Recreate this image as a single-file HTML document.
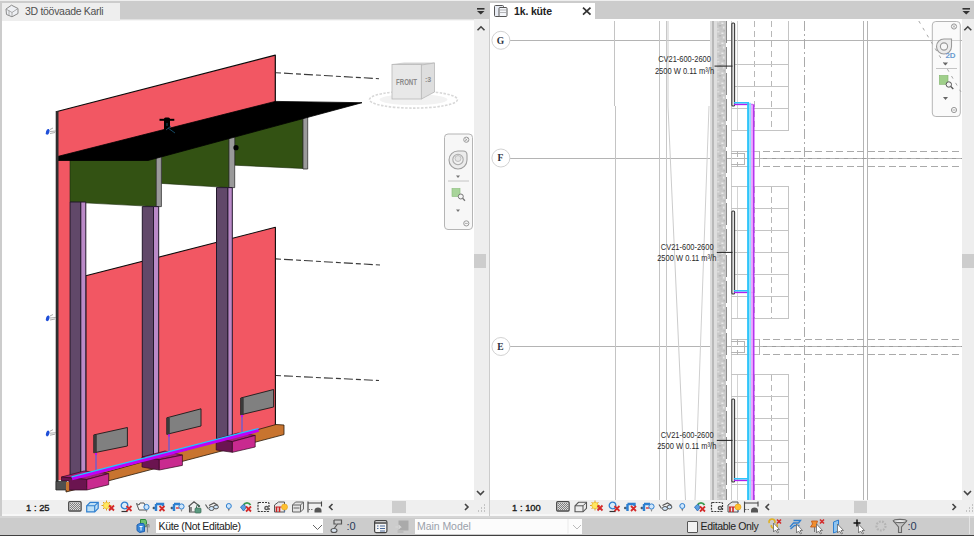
<!DOCTYPE html>
<html><head><meta charset="utf-8">
<style>
html,body{margin:0;padding:0;}
body{width:974px;height:536px;overflow:hidden;background:#cccccc;position:relative;font-family:"Liberation Sans",sans-serif;}
.a{position:absolute;}
svg{position:absolute;overflow:hidden;}
.txt{position:absolute;white-space:nowrap;font-family:"Liberation Sans",sans-serif;}
</style></head>
<body>
<!-- top light row -->
<div class="a" style="left:0;top:0;width:974px;height:1px;background:#eeeeee"></div>
<!-- left panel -->
<div class="a" style="left:2px;top:18.6px;width:486.6px;height:1.4px;background:#e2e2e2"></div><div class="a" style="left:2px;top:20px;width:486.6px;height:1px;background:#f6f6f6"></div>
<div class="a" style="left:2px;top:2.8px;width:118.3px;height:18.2px;background:#eeeeee"></div>
<div class="txt" id="t1" style="left:25px;top:4px;font-size:10.5px;line-height:14px;color:#505050;letter-spacing:-0.3px">3D töövaade Karli</div>
<div class="a" style="left:2px;top:21px;width:472px;height:479px;background:#ffffff"></div>
<svg style="left:2px;top:21px" width="472" height="479" viewBox="2 21 472 479">
<g stroke-linejoin="round">
<!-- upper pink panel -->
<polygon points="57,111.5 275.3,55.2 275.3,104 57,160" fill="#f25763" stroke="#0a0a0a" stroke-width="1.2"/>
<!-- dash-dot lines -->
<path d="M276,72.7 L379,78.7" stroke="#3a3a3a" stroke-width="1.1" stroke-dasharray="5,3,9,3" fill="none"/>
<path d="M276,258.9 L380,265" stroke="#3a3a3a" stroke-width="1.1" stroke-dasharray="5,3,9,3" fill="none"/>
<path d="M276,375.5 L379,380.5" stroke="#3a3a3a" stroke-width="1.1" stroke-dasharray="5,3,9,3" fill="none"/>
<!-- left pink strip -->
<rect x="57" y="158" width="13.5" height="322" fill="#f25763"/>
<!-- lower pink panel -->
<polygon points="85.8,275.8 275.4,227.3 275.4,426.5 85.8,479.5" fill="#f25763" stroke="#0a0a0a" stroke-width="1.1"/>
<!-- green panels -->
<polygon points="70,159 156.3,155 156.3,206.6 70,202.1" fill="#335213" stroke="#1a2a0a" stroke-width="0.6"/>
<polygon points="161.4,145 229,128 229,187.6 161.4,183.4" fill="#335213" stroke="#1a2a0a" stroke-width="0.6"/>
<polygon points="234.7,128 303,112 303,168.5 234.7,165.2" fill="#335213" stroke="#1a2a0a" stroke-width="0.6"/>
<!-- gray column edges -->
<rect x="156.3" y="150" width="5.1" height="56.6" fill="#9a9a9a" stroke="#333" stroke-width="0.8"/>
<rect x="229" y="128" width="5.7" height="59.6" fill="#9a9a9a" stroke="#333" stroke-width="0.8"/>
<rect x="303" y="112" width="4.7" height="57" fill="#9a9a9a" stroke="#333" stroke-width="0.8"/>
<!-- slab -->
<polygon points="57.5,156.5 275.3,101.4 362,102.7 148,160.5 57.5,160.5" fill="#000" stroke="#000" stroke-width="0.8"/>
<!-- vent -->
<path d="M159.5,119.8 L174.3,119.8" stroke="#000" stroke-width="2" fill="none"/><rect x="164" y="117.5" width="6" height="13" rx="1.5" fill="#000"/><path d="M167,123 L167,126 M168,128 L175,133 M166,130 L171,126" stroke="#1a5a7a" stroke-width="0.8"/>
<circle cx="236" cy="147.7" r="2.6" fill="#000"/>
<!-- purple columns -->
<rect x="70.1" y="202" width="10.7" height="276" fill="#614869" stroke="#22182a" stroke-width="1"/>
<rect x="80.8" y="202" width="5" height="276" fill="#bb8ac8" stroke="#22182a" stroke-width="1"/>
<rect x="142.3" y="206.6" width="11.2" height="252" fill="#614869" stroke="#22182a" stroke-width="1"/>
<rect x="153.5" y="206.6" width="5.2" height="252" fill="#bb8ac8" stroke="#22182a" stroke-width="1"/>
<rect x="216.5" y="187.6" width="11.4" height="252" fill="#614869" stroke="#22182a" stroke-width="1"/>
<rect x="227.9" y="187.6" width="4.4" height="252" fill="#bb8ac8" stroke="#22182a" stroke-width="1"/>
<!-- left dark edge -->
<rect x="55.7" y="111" width="2.8" height="379" fill="#2e2e2e"/>
<!-- grilles -->
<polygon points="93.8,434.9 127.4,427.5 127.4,446 93.8,452.8" fill="#808080" stroke="#1a1a1a" stroke-width="0.9"/>
<rect x="93.8" y="435" width="3" height="18" fill="#3a3a3a"/>
<polygon points="166.8,417.8 201,408.8 201,426 166.8,434.3" fill="#808080" stroke="#1a1a1a" stroke-width="0.9"/>
<rect x="166.8" y="418" width="3" height="16.5" fill="#3a3a3a"/>
<polygon points="240.7,398 273.6,389.5 273.6,407 240.7,414.8" fill="#808080" stroke="#1a1a1a" stroke-width="0.9"/>
<rect x="240.7" y="398" width="3" height="17" fill="#3a3a3a"/>
<!-- small vertical pipes -->
<path d="M96,453 L96,471 M169,434.5 L169,452 M242,415 L242,433" stroke="#4a5cf0" stroke-width="1.1" fill="none"/><path d="M96,453 L96,455 M169,434.5 L169,436.5 M242,415 L242,417" stroke="#c800ff" stroke-width="1.6" fill="none"/>
<!-- orange base -->
<polygon points="66,483.5 276,424.5 284,425 284,434.6 66,492" fill="#c8742f" stroke="#2a1a0a" stroke-width="0.8"/>
<!-- pedestals -->
<polygon points="61.5,477 84,471 108.7,473.6 86.8,479.5" fill="#a5207a" stroke="#300820" stroke-width="0.7"/>
<polygon points="61.5,477 86.8,479.5 86.8,490 69,490 69,481 61.5,481" fill="#6b1450" stroke="#300820" stroke-width="0.7"/>
<polygon points="86.8,479.5 108.7,473.6 108.7,484.7 86.8,490" fill="#c92a8f" stroke="#300820" stroke-width="0.7"/>
<polygon points="142,457 165,451 182.4,455.1 159.3,459.7" fill="#a5207a" stroke="#300820" stroke-width="0.7"/>
<polygon points="142,457 159.3,459.7 159.3,470 142,467" fill="#6b1450" stroke="#300820" stroke-width="0.7"/>
<polygon points="159.3,459.7 182.4,455.1 182.4,465.4 159.3,470" fill="#c92a8f" stroke="#300820" stroke-width="0.7"/>
<polygon points="216.2,439 238,433 255.2,435.4 232.4,441.6" fill="#a5207a" stroke="#300820" stroke-width="0.7"/>
<polygon points="216.2,439 232.4,441.6 232.4,452.3 216.2,450" fill="#6b1450" stroke="#300820" stroke-width="0.7"/>
<polygon points="232.4,441.6 255.2,435.4 255.2,447 232.4,452.3" fill="#c92a8f" stroke="#300820" stroke-width="0.7"/>
<!-- dark block -->
<rect x="56" y="481.3" width="10.5" height="8.7" fill="#505050" stroke="#222" stroke-width="0.7"/>
<rect x="66" y="482" width="3.2" height="8" fill="#c8742f"/>
<!-- main pipe -->
<path d="M72,478.6 L258.6,430.2" stroke="#c000f8" stroke-width="3.4" fill="none"/>
<path d="M71.5,476.8 L258.6,428.5" stroke="#1ec8ff" stroke-width="1.2" fill="none"/>
<!-- small blue markers -->
<g fill="#1f4fd8"><ellipse cx="47.7" cy="131.8" rx="1.7" ry="3" transform="rotate(20 47.7 131.8)"/><ellipse cx="47.7" cy="318.3" rx="1.7" ry="3" transform="rotate(20 47.7 318.3)"/><ellipse cx="47.7" cy="433.5" rx="1.7" ry="3" transform="rotate(20 47.7 433.5)"/></g>
<g stroke="#888" stroke-width="0.7"><path d="M50,129.5 L53,128 M50,131.5 L56,131 M50,133.5 L55,132.5 M50,316 L53,314.5 M50,318 L56,317.5 M50,320 L55,319 M50,431.2 L53,429.7 M50,433.2 L56,432.7 M50,435.2 L55,434.2"/></g>
</g>
<!-- view cube -->
<ellipse cx="413.5" cy="99.6" rx="44" ry="8.5" fill="none" stroke="#d8d8d8" stroke-width="1.6" stroke-dasharray="2.5,1.5"/>
<ellipse cx="413.5" cy="99.6" rx="34" ry="5.5" fill="#f2f2f2" stroke="none"/>
<polygon points="392,64.5 404,63 434.5,63 421.4,65" fill="#dcdcdc" stroke="#bbb" stroke-width="0.6"/>
<rect x="392" y="64.5" width="29.4" height="34.5" fill="#e8e8e8" stroke="#b8b8b8" stroke-width="0.8"/>
<polygon points="421.4,65 434.5,63 434.5,92 421.4,99" fill="#dedede" stroke="#b8b8b8" stroke-width="0.8"/>
<text x="406.5" y="85" font-family="Liberation Sans" font-size="8.5" fill="#8a8a8a" text-anchor="middle" textLength="21" lengthAdjust="spacingAndGlyphs" font-weight="bold">FRONT</text>
<text x="428" y="82" font-family="Liberation Sans" font-size="7" fill="#8a8a8a" text-anchor="middle" font-weight="bold">:3</text>
<!-- nav bar -->
<rect x="444.5" y="134" width="28" height="95.5" rx="3.5" fill="#f7f7f7" stroke="#b5b5b5" stroke-width="1"/>
<circle cx="466.3" cy="139.7" r="2.6" fill="none" stroke="#999" stroke-width="1"/>
<circle cx="466.3" cy="223.4" r="2.6" fill="none" stroke="#999" stroke-width="1"/>
<path d="M464.8,223.4 L467.8,223.4 M465.1,138.5 L467.5,140.9 M467.5,138.5 L465.1,140.9" stroke="#999" stroke-width="0.8"/>
<path d="M458,151 a9,9 0 1 0 9,9 L467,155 Q467,151 463,151 Z" fill="#ececec" stroke="#a0a0a0" stroke-width="1.1"/>
<circle cx="458" cy="159.5" r="5.2" fill="#f0f0f0" stroke="#aaaaaa" stroke-width="1.1"/><circle cx="458" cy="158.5" r="3" fill="#e4e4e4" stroke="#b4b4b4" stroke-width="0.8"/>
<path d="M456,175.5 L460,175.5 L458,178 Z" fill="#777"/>
<path d="M448,181 L469,181" stroke="#c4c4c4" stroke-width="1"/>
<rect x="452" y="188.5" width="8" height="8" fill="#a8d49a" stroke="#88bb78" stroke-width="0.6"/>
<circle cx="460.8" cy="196.5" r="2.5" fill="#f4f4f4" stroke="#777" stroke-width="1"/>
<path d="M462.6,198.3 L465,200.7" stroke="#777" stroke-width="1.3"/>
<path d="M456,209.5 L460,209.5 L458,212 Z" fill="#777"/>
</svg>

<div class="a" style="left:474px;top:18.6px;width:14.6px;height:481.4px;background:#eeeeee"></div>
<div class="a" style="left:474px;top:254px;width:12px;height:14px;background:#cdcdcd"></div>
<div class="a" style="left:2px;top:500px;width:486.6px;height:13.5px;background:#efefef"></div>
<div class="a" style="left:2px;top:513.5px;width:486.6px;height:2px;background:#f7f7f7"></div>
<div class="a" style="left:392.4px;top:501px;width:13.6px;height:12.3px;background:#cdcdcd"></div>
<div class="txt" id="t2" style="left:26px;top:501.5px;font-size:9.4px;line-height:12px;color:#1a1a1a;font-weight:normal;-webkit-text-stroke:0.35px #1a1a1a;letter-spacing:-0.1px;word-spacing:0.3px">1 : 25</div>
<!-- right panel -->
<div class="a" style="left:490px;top:18.6px;width:484px;height:2.4px;background:#ffffff"></div>
<div class="a" style="left:490px;top:2.8px;width:105.2px;height:18.2px;background:#ffffff"></div>
<div class="txt" id="t3" style="left:514px;top:4px;font-size:10.5px;line-height:14px;color:#222;font-weight:bold;letter-spacing:-0.15px">1k. küte</div>
<div class="a" style="left:490px;top:21px;width:471.5px;height:479px;background:#ffffff"></div>
<svg style="left:490px;top:21px" width="471.5" height="479" viewBox="490 21 471.5 479">
<g fill="none" shape-rendering="crispEdges">
<path d="M510,40.5 L962,40.5" stroke="#b4b4b4" stroke-width="1"/>
<path d="M510,158.5 L962,158.5" stroke="#b4b4b4" stroke-width="1"/>
<path d="M510,346.5 L962,346.5" stroke="#b4b4b4" stroke-width="1"/>
<path d="M659.5,21 L659.5,500" stroke="#c4c4c4" stroke-width="1"/>
<path d="M666,21 L666,500" stroke="#c8c8c8" stroke-width="1"/>
<path d="M614.5,21 L614.5,106 M615.5,106 L615.5,500" stroke="#c4c4c4" stroke-width="1"/>
</g>
<path d="M668,21 L668,106 L685.5,500" stroke="#cccccc" stroke-width="1" fill="none"/>
<path d="M709,106 L695,500" stroke="#d0d0d0" stroke-width="1" fill="none"/>
<g shape-rendering="crispEdges">
<rect x="709.8" y="21" width="2.2" height="479" fill="#dcdcdc"/>
<rect x="712" y="21" width="2" height="479" fill="#b8b8b8"/>
<rect x="714" y="21" width="2.5" height="479" fill="#dedede"/>
<rect x="716.5" y="21" width="9.5" height="479" fill="#c9c9c9"/>
<path d="M726.6,21 L726.6,500" stroke="#8a8a8a" stroke-width="1.2" stroke-dasharray="22,4"/>
</g>
<defs><pattern id="hp" x="716.5" y="0" width="9.5" height="10" patternUnits="userSpaceOnUse"><rect x="1" y="1" width="1.5" height="1.5" fill="#e6e6e6"/><rect x="5" y="2.5" width="2" height="1.5" fill="#ededed"/><rect x="2.5" y="5" width="2" height="1.5" fill="#b0b0b0"/><rect x="6.5" y="6.5" width="1.5" height="2" fill="#eaeaea"/><rect x="0.5" y="8" width="1.5" height="1.5" fill="#dedede"/><rect x="7" y="0" width="1.5" height="1.5" fill="#b8b8b8"/><rect x="4" y="8.5" width="1.5" height="1" fill="#bdbdbd"/></pattern></defs>
<rect x="716.5" y="21" width="9.5" height="479" fill="url(#hp)"/>
<g fill="none" shape-rendering="crispEdges">
<path d="M731,21 L731,500" stroke="#cccccc" stroke-width="1"/>
<path d="M804,21 L804,500" stroke="#aaaaaa" stroke-width="1" stroke-dasharray="10,3,2,3"/>
<path d="M863,21 L863,500 M867.2,21 L867.2,500" stroke="#b4b4b4" stroke-width="1"/>
<path d="M788.5,21 L788.5,130.5" stroke="#c4c4c4" stroke-width="1"/><path d="M737,21 L737,130.5" stroke="#d4d4d4" stroke-width="1"/>
<path d="M754.2,21 L754.2,130.5 M771.5,21 L771.5,130.5" stroke="#b8b8b8" stroke-width="1" stroke-dasharray="6,4"/>
<path d="M731,64.5 L789,64.5" stroke="#c4c4c4" stroke-width="1"/>
<path d="M731,86.5 L789,86.5" stroke="#c4c4c4" stroke-width="1"/>
<path d="M731,108.5 L789,108.5" stroke="#c4c4c4" stroke-width="1"/>
<path d="M731,130.5 L789,130.5" stroke="#c4c4c4" stroke-width="1"/>
<path d="M788.5,186.5 L788.5,318.5" stroke="#c4c4c4" stroke-width="1"/><path d="M737,186.5 L737,318.5" stroke="#d4d4d4" stroke-width="1"/>
<path d="M754.2,186.5 L754.2,318.5 M771.5,186.5 L771.5,318.5" stroke="#b8b8b8" stroke-width="1" stroke-dasharray="6,4"/>
<path d="M731,186.5 L789,186.5" stroke="#c4c4c4" stroke-width="1"/>
<path d="M731,208.5 L789,208.5" stroke="#c4c4c4" stroke-width="1"/>
<path d="M731,230.5 L789,230.5" stroke="#c4c4c4" stroke-width="1"/>
<path d="M731,252.5 L789,252.5" stroke="#c4c4c4" stroke-width="1"/>
<path d="M731,274.5 L789,274.5" stroke="#c4c4c4" stroke-width="1"/>
<path d="M731,296.5 L789,296.5" stroke="#c4c4c4" stroke-width="1"/>
<path d="M731,318.5 L789,318.5" stroke="#c4c4c4" stroke-width="1"/>
<path d="M788.5,374.5 L788.5,500" stroke="#c4c4c4" stroke-width="1"/><path d="M737,374.5 L737,500" stroke="#d4d4d4" stroke-width="1"/>
<path d="M754.2,374.5 L754.2,500 M771.5,374.5 L771.5,500" stroke="#b8b8b8" stroke-width="1" stroke-dasharray="6,4"/>
<path d="M731,374.5 L789,374.5" stroke="#c4c4c4" stroke-width="1"/>
<path d="M731,396.5 L789,396.5" stroke="#c4c4c4" stroke-width="1"/>
<path d="M731,418.5 L789,418.5" stroke="#c4c4c4" stroke-width="1"/>
<path d="M731,440.5 L789,440.5" stroke="#c4c4c4" stroke-width="1"/>
<path d="M731,462.5 L789,462.5" stroke="#c4c4c4" stroke-width="1"/>
<path d="M731,484.5 L789,484.5" stroke="#c4c4c4" stroke-width="1"/>
<path d="M731,151.0 L760,151.0" stroke="#c0c0c0" stroke-width="1"/>
<path d="M762.5,151.0 L962,151.0" stroke="#aaaaaa" stroke-width="1" stroke-dasharray="7,3.5"/>
<path d="M731,166.5 L760,166.5" stroke="#c0c0c0" stroke-width="1"/>
<path d="M762.5,166.5 L962,166.5" stroke="#aaaaaa" stroke-width="1" stroke-dasharray="7,3.5"/>
<path d="M762.5,158.5 L962,158.5" stroke="#9c9c9c" stroke-width="1" stroke-dasharray="4,5"/>
<path d="M731,153.0 L744.5,153.0 L744.5,164.5 L731,164.5 M737.5,150.5 L737.5,156.5 M737.5,161.5 L737.5,166.5 M759.8,151.0 L759.8,166.5" stroke="#b4b4b4" stroke-width="1"/>
<path d="M731,339.0 L760,339.0" stroke="#c0c0c0" stroke-width="1"/>
<path d="M762.5,339.0 L962,339.0" stroke="#aaaaaa" stroke-width="1" stroke-dasharray="7,3.5"/>
<path d="M731,354.5 L760,354.5" stroke="#c0c0c0" stroke-width="1"/>
<path d="M762.5,354.5 L962,354.5" stroke="#aaaaaa" stroke-width="1" stroke-dasharray="7,3.5"/>
<path d="M762.5,346.5 L962,346.5" stroke="#9c9c9c" stroke-width="1" stroke-dasharray="4,5"/>
<path d="M731,341.0 L744.5,341.0 L744.5,352.5 L731,352.5 M737.5,338.5 L737.5,344.5 M737.5,349.5 L737.5,354.5 M759.8,339.0 L759.8,354.5" stroke="#b4b4b4" stroke-width="1"/>
</g>
<rect x="731.8" y="23" width="2.8" height="83" rx="1" fill="#e0e0e0" stroke="#3a3a3a" stroke-width="1.1"/>
<path d="M734,102.8 L749,102.8" stroke="#2ec5fa" stroke-width="1.6" fill="none"/>
<path d="M734,104.5 L753,104.5" stroke="#b020f0" stroke-width="1.3" fill="none"/>
<path d="M714.5,66.1 L732.5,66.1" stroke="#222" stroke-width="1" fill="none"/>
<text x="684.5" y="62.2" font-family="Liberation Sans" font-size="9" fill="#2a2a2a" text-anchor="middle" textLength="52.7" lengthAdjust="spacingAndGlyphs">CV21-600-2600</text>
<text x="684.5" y="73.7" font-family="Liberation Sans" font-size="9" fill="#2a2a2a" text-anchor="middle" textLength="59.2" lengthAdjust="spacingAndGlyphs">2500 W 0.11 m³/h</text>
<rect x="731.8" y="211" width="2.8" height="83" rx="1" fill="#e0e0e0" stroke="#3a3a3a" stroke-width="1.1"/>
<path d="M734,290.8 L749,290.8" stroke="#2ec5fa" stroke-width="1.6" fill="none"/>
<path d="M734,292.5 L753,292.5" stroke="#b020f0" stroke-width="1.3" fill="none"/>
<path d="M716.8,252.4 L732.5,252.4" stroke="#222" stroke-width="1" fill="none"/>
<text x="687.2" y="249.8" font-family="Liberation Sans" font-size="9" fill="#2a2a2a" text-anchor="middle" textLength="52.7" lengthAdjust="spacingAndGlyphs">CV21-600-2600</text>
<text x="686.8" y="260.9" font-family="Liberation Sans" font-size="9" fill="#2a2a2a" text-anchor="middle" textLength="59.2" lengthAdjust="spacingAndGlyphs">2500 W 0.11 m³/h</text>
<rect x="731.8" y="399" width="2.8" height="83" rx="1" fill="#e0e0e0" stroke="#3a3a3a" stroke-width="1.1"/>
<path d="M734,478.8 L749,478.8" stroke="#2ec5fa" stroke-width="1.6" fill="none"/>
<path d="M734,480.5 L753,480.5" stroke="#b020f0" stroke-width="1.3" fill="none"/>
<path d="M716.8,440.4 L732.5,440.4" stroke="#222" stroke-width="1" fill="none"/>
<text x="687.2" y="437.8" font-family="Liberation Sans" font-size="9" fill="#2a2a2a" text-anchor="middle" textLength="52.7" lengthAdjust="spacingAndGlyphs">CV21-600-2600</text>
<text x="686.8" y="448.9" font-family="Liberation Sans" font-size="9" fill="#2a2a2a" text-anchor="middle" textLength="59.2" lengthAdjust="spacingAndGlyphs">2500 W 0.11 m³/h</text>
<rect x="747.1" y="102.8" width="2" height="397.2" fill="#2ec5fa"/>
<rect x="749.1" y="102.8" width="2" height="397.2" fill="#8fdcfb"/>
<rect x="751.1" y="104.3" width="1.8" height="395.7" fill="#eaa2ff"/>
<rect x="752.9" y="104.3" width="1.6" height="395.7" fill="#b535f0"/>
<circle cx="500.9" cy="40.3" r="9" fill="#fff" stroke="#d2d2d2" stroke-width="1"/>
<text x="500.4" y="43.599999999999994" font-family="Liberation Serif" font-size="9.5" font-weight="bold" fill="#2a3040" text-anchor="middle">G</text>
<circle cx="500.9" cy="158" r="9" fill="#fff" stroke="#d2d2d2" stroke-width="1"/>
<text x="500.4" y="161.3" font-family="Liberation Serif" font-size="9.5" font-weight="bold" fill="#2a3040" text-anchor="middle">F</text>
<circle cx="500.9" cy="346.5" r="9" fill="#fff" stroke="#d2d2d2" stroke-width="1"/>
<text x="500.4" y="349.8" font-family="Liberation Serif" font-size="9.5" font-weight="bold" fill="#2a3040" text-anchor="middle">E</text>
<rect x="932.3" y="21.5" width="28" height="95" rx="3.5" fill="#f4f4f4" fill-opacity="0.45" stroke="#b5b5b5" stroke-width="1"/>
<path d="M918.8,21 L961,92" stroke="#a8a8a8" stroke-width="1" stroke-dasharray="3,5" fill="none"/>
<circle cx="954" cy="26.5" r="2.6" fill="none" stroke="#999" stroke-width="1"/>
<circle cx="954" cy="110" r="2.6" fill="none" stroke="#999" stroke-width="1"/>
<path d="M952.5,110 L955.5,110 M952.8,25.3 L955.2,27.7 M955.2,25.3 L952.8,27.7" stroke="#999" stroke-width="0.8"/>
<path d="M944,39 a7.5,7.5 0 1 0 7.5,7.5 L951.5,39 Z" fill="#ececec" stroke="#9a9a9a" stroke-width="1.1"/>
<circle cx="944" cy="46.5" r="3.6" fill="#f8f8f8" stroke="#9a9a9a" stroke-width="1.1"/>
<text x="950.5" y="57.5" font-family="Liberation Sans" font-size="8" font-weight="bold" fill="#6a9ad0" text-anchor="middle">2D</text>
<path d="M943,62.5 L948,62.5 L945.5,65.5 Z" fill="#666"/>
<path d="M936,68.5 L957,68.5" stroke="#c4c4c4" stroke-width="1"/>
<rect x="939.4" y="75.5" width="8.6" height="8.8" fill="#9fcf8a" stroke="#7fb36a" stroke-width="0.6"/>
<circle cx="948.8" cy="84.5" r="2.7" fill="#f4f4f4" stroke="#555" stroke-width="1"/>
<path d="M950.8,86.5 L953.3,89" stroke="#555" stroke-width="1.3"/>
<path d="M943,97 L948,97 L945.5,100 Z" fill="#666"/>
</svg>
<div class="a" style="left:961.5px;top:18.6px;width:12.5px;height:481.9px;background:#eeeeee"></div>
<div class="a" style="left:961.5px;top:254px;width:12.5px;height:14px;background:#cdcdcd"></div>
<div class="a" style="left:490px;top:500px;width:484px;height:13.5px;background:#efefef"></div>
<div class="a" style="left:490px;top:513.5px;width:484px;height:2px;background:#f7f7f7"></div>
<div class="a" style="left:853.6px;top:501px;width:13.5px;height:12.3px;background:#cdcdcd"></div>
<div class="txt" id="t4" style="left:512px;top:501.5px;font-size:9.4px;line-height:12px;color:#1a1a1a;font-weight:normal;-webkit-text-stroke:0.35px #1a1a1a;letter-spacing:-0.1px;word-spacing:0.3px">1 : 100</div>
<!-- bottom status -->
<div class="a" style="left:0;top:515.5px;width:974px;height:2.5px;background:#d6d6d6"></div>
<div class="a" style="left:0;top:534.5px;width:974px;height:2px;background:#404040"></div>
<div class="a" style="left:156.3px;top:519.2px;width:166.7px;height:13.8px;background:#ffffff"></div>
<div class="txt" id="t5" style="left:158.5px;top:519.5px;font-size:10.5px;line-height:13px;color:#222;letter-spacing:-0.35px">Küte (Not Editable)</div>
<div class="a" style="left:415px;top:519px;width:166.6px;height:14.5px;background:#fcfcfc"></div>
<div class="txt" id="t6" style="left:417px;top:519.5px;font-size:10.5px;line-height:13px;color:#9aa0aa;letter-spacing:-0.05px">Main Model</div>
<div class="txt" id="t7" style="left:346.5px;top:519.5px;font-size:11px;line-height:13px;color:#2a3a5a">:0</div>
<div class="a" style="left:686.8px;top:520.5px;width:9.5px;height:10px;background:#f2f2f2;border:1px solid #555;border-radius:1px"></div>
<div class="txt" id="t8" style="left:700.5px;top:519.5px;font-size:10.5px;line-height:13px;color:#222;letter-spacing:-0.35px">Editable Only</div>
<div class="txt" id="t9" style="left:907.5px;top:519.5px;font-size:11px;line-height:13px;color:#2a3a5a">:0</div>
<svg style="left:0;top:0" width="974" height="536" viewBox="0 0 974 536">
<defs>
<pattern id="chk" width="2" height="2" patternUnits="userSpaceOnUse"><rect width="1" height="1" fill="#666"/><rect x="1" y="1" width="1" height="1" fill="#666"/></pattern>
<symbol id="i-grid" overflow="visible"><rect x="0.7" y="0.7" width="12.4" height="9.3" rx="1" fill="#ddd" stroke="#4a4a4a" stroke-width="1.3"/><rect x="2" y="2" width="10" height="7" fill="url(#chk)" opacity="0.8"/></symbol>
<symbol id="i-cube" overflow="visible"><path d="M1,4.5 L4.5,1 L12.5,1 L12.5,7 L9,10.5 L1,10.5 Z" fill="#bfe0f5" stroke="#2e7fd0" stroke-width="1.2"/><path d="M1,4.5 L9,4.5 L12.5,1 M9,4.5 L9,10.5" fill="none" stroke="#2e7fd0" stroke-width="1.1"/></symbol>
<symbol id="i-cubeg" overflow="visible"><path d="M1,4.5 L4.5,1 L12.5,1 L12.5,7 L9,10.5 L1,10.5 Z" fill="#ececec" stroke="#555" stroke-width="1.1"/><path d="M1,4.5 L9,4.5 L12.5,1 M9,4.5 L9,10.5" fill="none" stroke="#555" stroke-width="1"/></symbol>
<symbol id="x" overflow="visible"><path d="M-2.5,-2.5 L2.5,2.5 M2.5,-2.5 L-2.5,2.5" stroke="#d42a2a" stroke-width="1.8"/></symbol>
<symbol id="i-sun" overflow="visible"><g stroke="#e0a020" stroke-width="1"><path d="M5,0 L5,10 M0,5 L10,5 M1.5,1.5 L8.5,8.5 M8.5,1.5 L1.5,8.5"/></g><circle cx="5" cy="5" r="3.2" fill="#ffe860" stroke="#e8b020" stroke-width="0.6"/><use href="#x" x="10" y="7.5"/></symbol>
<symbol id="i-magx" overflow="visible"><circle cx="4" cy="4.5" r="3.3" fill="#d8ecfa" stroke="#2e7fd0" stroke-width="1.3"/><path d="M1,10.5 L7,10.5" stroke="#333" stroke-width="1.2"/><use href="#x" x="8.5" y="7.5"/></symbol>
<symbol id="i-teapot" overflow="visible"><path d="M0.5,2.5 L3,4 L4,2 L8,2 L9,4 L10,9 L3,9 Z" fill="#f4f4f4" stroke="#555" stroke-width="1"/><circle cx="10.5" cy="6" r="2.6" fill="#cfe6fb" stroke="#2e7fd0" stroke-width="1"/><path d="M9.5,9 L11.5,9 L10.5,11.5" fill="#888"/></symbol>
<symbol id="i-bluex" overflow="visible"><path d="M0,7 L2,7 M3,3 L10,3 L10,5 M3,3 L3,10" stroke="#2e7fd0" stroke-width="2.4" fill="none"/><circle cx="0.5" cy="7" r="1" fill="#555"/><use href="#x" x="9" y="7.5"/></symbol>
<symbol id="i-blueb" overflow="visible"><path d="M0,7 L2,7 M3,3 L9,3 M3,3 L3,10" stroke="#2e7fd0" stroke-width="2.4" fill="none"/><circle cx="0.5" cy="7" r="1" fill="#555"/><rect x="5" y="6" width="3" height="2" fill="#e07070"/><circle cx="10.5" cy="5.5" r="2.6" fill="#cfe6fb" stroke="#2e7fd0" stroke-width="1"/><path d="M9.5,8.5 L11.5,8.5 L10.5,11" fill="#888"/></symbol>
<symbol id="i-houselock" overflow="visible"><path d="M0.5,5.5 L6,0.8 L12,5.5 M1.5,5 L1.5,11 L7,11 M10.5,4.5 L10.5,6" fill="#f0f0f0" stroke="#555" stroke-width="1.1"/><path d="M3,6 L3,10.5" stroke="#666" stroke-width="1.5"/><rect x="7" y="7" width="6" height="5" rx="1" fill="#5a9a80" stroke="#3a6a55" stroke-width="0.7"/><path d="M8.5,7 L8.5,5.5 a1.5,1.5 0 0 1 3,0" fill="none" stroke="#3a6a55" stroke-width="1"/></symbol>
<symbol id="i-glasses" overflow="visible"><path d="M0.5,3 L3,7 M4,4 L9,1.5 L13,4" fill="none" stroke="#555" stroke-width="1.1"/><ellipse cx="6.5" cy="7" rx="2.6" ry="2" fill="#cfe6fb" stroke="#555" stroke-width="1"/><ellipse cx="11" cy="5.5" rx="2.4" ry="1.9" fill="#cfe6fb" stroke="#555" stroke-width="1"/></symbol>
<symbol id="i-bulb" overflow="visible"><circle cx="2.8" cy="4" r="2.5" fill="#cfe6fb" stroke="#2e7fd0" stroke-width="1"/><path d="M1.8,7 L3.8,7 L2.8,9.5" fill="#777"/></symbol>
<symbol id="i-reveal" overflow="visible"><path d="M4,4 a4,4 0 0 1 7,0" fill="none" stroke="#3a9a50" stroke-width="1.8"/><path d="M1,6 L4,3.5 L7,6 L4,10 Z" fill="#5aa0e0" stroke="#2e6fc0" stroke-width="0.9"/><use href="#x" x="9" y="8"/></symbol>
<symbol id="i-film" overflow="visible"><rect x="1" y="1.5" width="11" height="9" rx="1" fill="#f4f4f4" stroke="#3a3a3a" stroke-width="1.2" stroke-dasharray="2,1"/><circle cx="9.5" cy="7" r="2.3" fill="#555"/><circle cx="9.5" cy="7" r="1" fill="#ddd"/></symbol>
<symbol id="i-housebulb" overflow="visible"><path d="M1,4 L5,1 L11,1 L11,11 L1,11 Z" fill="#e8e8e8" stroke="#555" stroke-width="1"/><path d="M3,6 L3,11 M6,6 L6,11" stroke="#c22" stroke-width="1.6"/><path d="M2,6 L8,6" stroke="#c22" stroke-width="1"/><circle cx="11" cy="6" r="3" fill="#ffc030" stroke="#e0a010" stroke-width="0.6"/><path d="M10,9.5 L12,9.5 L11,12" fill="#5577aa"/></symbol>
<symbol id="i-cube3" overflow="visible"><path d="M1,4 L4,1 L12,1 L12,8 L9,11 L1,11 Z" fill="#e4e4e4" stroke="#666" stroke-width="1"/><path d="M1,4 L9,4 L12,1 M9,4 L9,11 M2,7 L8,7" fill="none" stroke="#666" stroke-width="1"/></symbol>
<symbol id="i-crop" overflow="visible"><path d="M0.5,0 L0.5,11 M14,0 L14,5 M0.5,1.5 L14,1.5" stroke="#444" stroke-width="1.1" fill="none"/><path d="M1,8 L6,8" stroke="#777" stroke-width="1" stroke-dasharray="1.5,1"/><path d="M7,11 L7,9 a3.5,3 0 0 1 7,0 L14,11 Z" fill="#555"/></symbol>
<symbol id="chev-l" overflow="visible"><path d="M3,-3 L0,0 L3,3" fill="none" stroke="#444" stroke-width="1.6"/></symbol>
<symbol id="chev-r" overflow="visible"><path d="M0,-3 L3,0 L0,3" fill="none" stroke="#444" stroke-width="1.6"/></symbol>
<symbol id="chev-u" overflow="visible"><path d="M-3.5,2 L0,-1.5 L3.5,2" fill="none" stroke="#444" stroke-width="1.6"/></symbol>
<symbol id="chev-d" overflow="visible"><path d="M-3.5,-2 L0,1.5 L3.5,-2" fill="none" stroke="#444" stroke-width="1.6"/></symbol>
<symbol id="ddown" overflow="visible"><path d="M0,0.8 L7.5,0.8" stroke="#333" stroke-width="1.6"/><path d="M0,3 L7.5,3 L3.75,6.5 Z" fill="#333"/></symbol>
<symbol id="grip" overflow="visible"><g fill="#999"><rect x="6" y="0" width="1" height="1"/><rect x="3" y="3" width="1" height="1"/><rect x="6" y="3" width="1" height="1"/><rect x="0" y="6" width="1" height="1"/><rect x="3" y="6" width="1" height="1"/><rect x="6" y="6" width="1" height="1"/></g></symbol>
</defs>
<use href="#i-grid" x="68" y="501"/>
<use href="#i-cube" x="85.7" y="501.3"/>
<use href="#i-sun" x="101.5" y="500.5"/>
<use href="#i-magx" x="120.5" y="501"/>
<use href="#i-teapot" x="136" y="501"/>
<use href="#i-bluex" x="153" y="501"/>
<use href="#i-blueb" x="171" y="501"/>
<use href="#i-houselock" x="188" y="501"/>
<use href="#i-glasses" x="205" y="501.5"/>
<use href="#i-bulb" x="226" y="502"/>
<use href="#i-reveal" x="239.5" y="501"/>
<use href="#i-film" x="257" y="501"/>
<use href="#i-housebulb" x="273.5" y="501"/>
<use href="#i-cube3" x="291.5" y="501"/>
<use href="#i-crop" x="307.5" y="501.5"/>
<use href="#chev-l" x="329.5" y="507"/>
<use href="#chev-r" x="465" y="507"/>
<use href="#i-grid" x="556" y="501"/>
<use href="#i-cubeg" x="574" y="501.3"/>
<use href="#i-sun" x="590" y="500.5"/>
<use href="#i-magx" x="608.5" y="501"/>
<use href="#i-bluex" x="624.5" y="501"/>
<use href="#i-blueb" x="641" y="501"/>
<use href="#i-glasses" x="658.5" y="501.5"/>
<use href="#i-bulb" x="679.5" y="502"/>
<use href="#i-reveal" x="693.5" y="501"/>
<use href="#i-film" x="710.5" y="501"/>
<use href="#i-housebulb" x="727" y="501"/>
<use href="#i-crop" x="744" y="501.5"/>
<use href="#chev-l" x="766" y="507"/>
<use href="#chev-r" x="952.5" y="507"/>
<use href="#chev-u" x="481" y="28.3"/>
<use href="#chev-d" x="480.5" y="493"/>
<use href="#chev-u" x="967.8" y="28.3"/>
<use href="#chev-d" x="967.5" y="493"/>
<use href="#grip" x="478" y="504.5"/>
<use href="#grip" x="966" y="504.5"/>
<use href="#ddown" x="477" y="8"/>
<use href="#ddown" x="962.5" y="8"/>
<path d="M583,7.7 L590.5,14.7 M590.5,7.7 L583,14.7" stroke="#333" stroke-width="1.7"/>
<path d="M6,9 L11.5,5.2 L18,8.5 L18,13.5 L12,16.8 L6.5,14.5 Z" fill="#eef0f4" stroke="#8a8a8a" stroke-width="1"/><path d="M6,9 L12,12.5 L18,8.5 M12,12.5 L12,16.8 M9,10.5 L9,15.5" fill="none" stroke="#999" stroke-width="0.8"/>
<rect x="494.5" y="5.5" width="9" height="11" rx="1" fill="#e8ecf4" stroke="#555" stroke-width="1"/><rect x="499" y="7.5" width="8" height="9" rx="1" fill="#f4f6fa" stroke="#555" stroke-width="1"/><path d="M500,10 L506,10 M500,12.5 L506,12.5" stroke="#999" stroke-width="0.7"/>
<g transform="translate(136.5,518.5)"><path d="M4,1 L9,1 L10,3 L10,8 L5,8 L4,6 Z" fill="#6cc070" stroke="#2e8a3a" stroke-width="1"/><path d="M0.5,6.5 L3,5 L7,5 L8,7 L8,13 L3,14 L0.5,12 Z" fill="#3a88d8" stroke="#1e5fb0" stroke-width="1"/><path d="M3,8 L6,8 M4.5,8 L4.5,12" stroke="#fff" stroke-width="1"/><path d="M11,6 L11,14 M9.5,6 L12.5,6 M9.5,6 L9.5,9 M12.5,6 L12.5,9" fill="none" stroke="#888" stroke-width="1.1"/></g>
<path d="M313,525 L317.5,529.5 L322,525" fill="none" stroke="#666" stroke-width="1"/>
<g transform="translate(330.5,519)"><path d="M3.5,1 L11,1 L11,5 L7,5 L4,9" fill="none" stroke="#555" stroke-width="1.2"/><path d="M3.5,1 L3.5,5 L6,5" fill="none" stroke="#555" stroke-width="1.2"/><ellipse cx="3.5" cy="11.5" rx="3" ry="2" fill="#d8e4f0" stroke="#555" stroke-width="1.1"/></g>
<g transform="translate(374,520)"><rect x="0.6" y="0.6" width="12.3" height="12" rx="1.5" fill="#f4f4f4" stroke="#444" stroke-width="1.2"/><path d="M1,3 L12.5,3" stroke="#444" stroke-width="1.5"/><path d="M3,6 L4.5,6 M6,6 L11,6 M3,8.5 L4.5,8.5 M6,8.5 L11,8.5 M6,11 L11,11" stroke="#4a6a9a" stroke-width="1.2"/></g>
<g transform="translate(395.5,520)"><rect x="3" y="0.5" width="10" height="10" fill="#aaaaaa"/><path d="M0,7 L5,7 L3,5 M5,7 L3,9" fill="none" stroke="#d6d6d6" stroke-width="1.2"/><rect x="2" y="10" width="6" height="3" fill="#bbbbbb"/></g>
<path d="M568,519 L568,533.5" stroke="#eaeaea" stroke-width="1"/><path d="M573,525 L577,529 L581,525" fill="none" stroke="#bbb" stroke-width="1"/>
<g transform="translate(768.5,519)"><path d="M1,4 a3,2.5 0 1 1 5,0 M3,6 a3,2.5 0 1 0 5,-1" fill="none" stroke="#e0b020" stroke-width="1.6"/><path d="M5,4 L5,13 L7,11 L9,14 L10,13.5 L8.5,10.5 L11,10.5 Z" fill="#fff" stroke="#666" stroke-width="0.8"/><path d="M8.5,0.5 L12.5,4.5 M12.5,0.5 L8.5,4.5" stroke="#d42a2a" stroke-width="1.6"/></g>
<g transform="translate(789.5,519)"><path d="M0.5,8 L4,4 L9,4 M1,10 L5,6.5 L10,6.5 M4,1.5 L11,1.5 L9,4" fill="none" stroke="#2e7fd0" stroke-width="1.3"/><path d="M7,5 L7,14 L9,12 L11,15 L12,14.5 L10.5,11.5 L13,11.5 Z" fill="#fff" stroke="#666" stroke-width="0.8"/></g>
<g transform="translate(810.5,519)"><path d="M1,2 L7,2 L6,5 L8,8 L0,8 L2,5 Z" fill="#f09030" stroke="#c05010" stroke-width="0.8"/><path d="M4,8 L4,13" stroke="#777" stroke-width="1"/><path d="M6,5 L6,14 L8,12 L10,15 L11,14.5 L9.5,11.5 L12,11.5 Z" fill="#fff" stroke="#666" stroke-width="0.8"/><path d="M9.5,0.5 L13.5,4.5 M13.5,0.5 L9.5,4.5" stroke="#d42a2a" stroke-width="1.6"/></g>
<g transform="translate(832.5,519)"><path d="M1,3 L6,1 L6,12 L1,14 Z" fill="#8ec4f0" stroke="#2e7fd0" stroke-width="1"/><path d="M5,5 L5,14 L7,12 L9,15 L10,14.5 L8.5,11.5 L11,11.5 Z" fill="#fff" stroke="#666" stroke-width="0.8"/></g>
<g transform="translate(853.5,519)"><path d="M0,4 L7,4 M3.5,0.5 L3.5,7.5" stroke="#111" stroke-width="1.5"/><path d="M5,5 L5,14 L7,12 L9,15 L10,14.5 L8.5,11.5 L11,11.5 Z" fill="#fff" stroke="#666" stroke-width="0.8"/></g>
<circle cx="881" cy="526" r="4.5" fill="none" stroke="#b4b4b4" stroke-width="2.2" stroke-dasharray="1.8,1.3"/><circle cx="881" cy="526" r="2.2" fill="#cccccc"/>
<path d="M893.5,521 L906.5,521 L901.5,527 L901.5,532.5 L898.5,532.5 L898.5,527 Z" fill="#c4c4c4" stroke="#6a6a6a" stroke-width="1.1"/><ellipse cx="900" cy="521" rx="6.5" ry="1.6" fill="#e8e8e8" stroke="#6a6a6a" stroke-width="1.1"/>
<path d="M969.5,516 L969.5,534" stroke="#e4e4e4" stroke-width="1"/>
</svg>

</body></html>
